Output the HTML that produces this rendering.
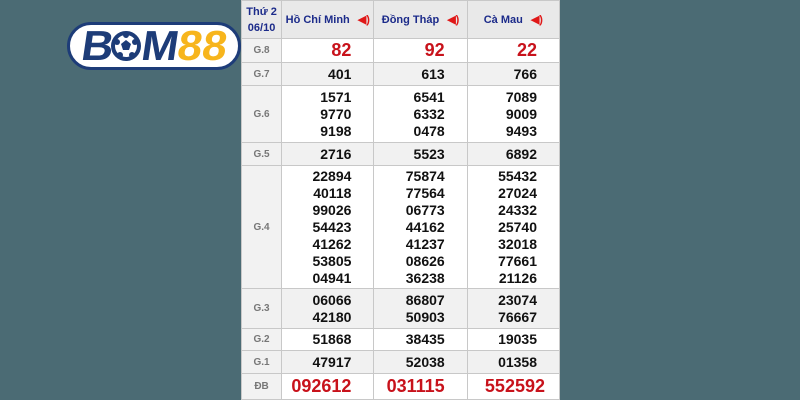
<!DOCTYPE html>
<html><head><meta charset="utf-8"><style>
body{margin:0;width:800px;height:400px;background:#4b6b74;position:relative;overflow:hidden;font-family:"Liberation Sans",sans-serif}
.logo{position:absolute;left:67px;top:22px;width:168px;height:42px;border:3px solid #1d3c78;border-radius:24px;background:#fff}
.logo span{position:absolute;top:0px;font-weight:900;font-size:42px;line-height:42px;transform:scaleX(1.05) skewX(-8deg);transform-origin:left}
table{position:absolute;left:241px;top:0;width:319px;border-collapse:collapse;background:#fff;table-layout:fixed}
td{border:1px solid #c8c8c8;padding:0;font-weight:bold;font-size:14px;color:#111;text-align:right;padding-right:22px;line-height:17px;vertical-align:middle;overflow:hidden}
td.l{text-align:center;padding:0;color:#777;font-size:10px;background:#f2f2f2}
tr.g td{background:#f1f1f1}
th{background:#e9e9e9;border:1px solid #c8c8c8;color:#1c2b8a;font-size:11px;height:37px;font-weight:bold;padding:0;white-space:nowrap}
.r{color:#c8121b;font-size:18px}
.s{color:#e01818;font-size:11px;margin-left:8px}
</style></head><body>
<div class="logo">
<span style="left:12px;color:#1d3c78">B</span>
<svg style="position:absolute;left:40px;top:5px" width="32" height="32" viewBox="0 0 32 32"><circle cx="16" cy="16" r="13" fill="#fff" stroke="#1d3c78" stroke-width="4"/><polygon points="16,10 21,14 19,20 13,20 11,14" fill="#1d3c78"/><circle cx="7" cy="12" r="3" fill="#1d3c78"/><circle cx="25" cy="12" r="3" fill="#1d3c78"/><circle cx="10" cy="25" r="3" fill="#1d3c78"/><circle cx="22" cy="25" r="3" fill="#1d3c78"/><circle cx="16" cy="5" r="3" fill="#1d3c78"/></svg>
<span style="left:72px;color:#1d3c78">M</span>
<span style="left:108px;color:#f7b51c">88</span>
</div>
<table>
<colgroup><col style="width:40px"><col style="width:92px"><col style="width:93px"><col style="width:92px"></colgroup>
<tr><th style="line-height:16px">Thứ 2<br>06/10</th><th>Hồ Chí Minh<span class="s">◀)</span></th><th>Đồng Tháp<span class="s">◀)</span></th><th>Cà Mau<span class="s">◀)</span></th></tr>
<tr style="height:24px"><td class="l">G.8</td><td class="r">82</td><td class="r">92</td><td class="r">22</td></tr>
<tr class="g" style="height:23px"><td class="l">G.7</td><td>401</td><td>613</td><td>766</td></tr>
<tr style="height:57px"><td class="l">G.6</td><td>1571<br>9770<br>9198</td><td>6541<br>6332<br>0478</td><td>7089<br>9009<br>9493</td></tr>
<tr class="g" style="height:23px"><td class="l">G.5</td><td>2716</td><td>5523</td><td>6892</td></tr>
<tr style="height:123px"><td class="l">G.4</td><td>22894<br>40118<br>99026<br>54423<br>41262<br>53805<br>04941</td><td>75874<br>77564<br>06773<br>44162<br>41237<br>08626<br>36238</td><td>55432<br>27024<br>24332<br>25740<br>32018<br>77661<br>21126</td></tr>
<tr class="g" style="height:40px"><td class="l">G.3</td><td>06066<br>42180</td><td>86807<br>50903</td><td>23074<br>76667</td></tr>
<tr style="height:22px"><td class="l">G.2</td><td>51868</td><td>38435</td><td>19035</td></tr>
<tr class="g" style="height:23px"><td class="l">G.1</td><td>47917</td><td>52038</td><td>01358</td></tr>
<tr style="height:26px"><td class="l">ĐB</td><td class="r" style="padding-right:22px">092612</td><td class="r" style="padding-right:22px">031115</td><td class="r" style="padding-right:14px">552592</td></tr>
</table>
</body></html>
